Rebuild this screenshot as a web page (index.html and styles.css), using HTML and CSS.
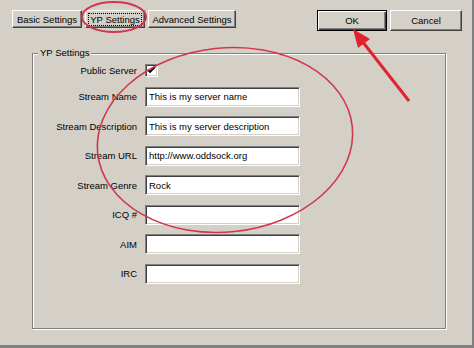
FILE: index.html
```html
<!DOCTYPE html>
<html lang="en">
<head>
    <meta charset="UTF-8">
    <title>YP Settings</title>
    <link rel="stylesheet" href="styles.css">
</head>
<body>
    <div class="window">
        <div class="top-bar">
            <div class="tabs">
                <button class="btn tab">Basic Settings</button>
                <button class="btn tab active"><span class="focus">YP Settings</span></button>
                <button class="btn tab">Advanced Settings</button>
            </div>
            <div class="actions">
                <button class="btn default">OK</button>
                <button class="btn">Cancel</button>
            </div>
        </div>

        <div class="group">
            <span class="group-title">YP Settings</span>
            <div class="form-grid">
                <label>Public Server</label>
                <span class="checkbox">
                    <svg width="9" height="9" viewBox="0 0 9 9"><path d="M1 4l2 2 5-5" fill="none" stroke="#000" stroke-width="1.8"/></svg>
                </span>

                <label>Stream Name</label>
                <input type="text" value="This is my server name">

                <label>Stream Description</label>
                <input type="text" value="This is my server description">

                <label>Stream URL</label>
                <input type="text" value="http://www.oddsock.org">

                <label>Stream Genre</label>
                <input type="text" value="Rock">

                <label>ICQ #</label>
                <input type="text" value="">

                <label>AIM</label>
                <input type="text" value="">

                <label>IRC</label>
                <input type="text" value="">
            </div>
        </div>

        <!-- red annotation marks drawn over the dialog -->
        <svg class="marks" width="474" height="348" viewBox="0 0 474 348">
            <ellipse cx="114" cy="17" rx="32" ry="15" fill="none" stroke="#d2364a" stroke-width="2"/>
            <ellipse cx="225" cy="140" rx="128" ry="92" transform="rotate(-6 225 140)" fill="none" stroke="#d2364a" stroke-width="1.6"/>
            <line x1="409" y1="101" x2="362" y2="41" stroke="#e1222f" stroke-width="3"/>
            <polygon points="353,29 370,39 358,48" fill="#e1222f"/>
        </svg>
    </div>
</body>
</html>
```

FILE: styles.css
```css
body {
    margin: 0;
    padding: 0;
    background: #808080;
    font-family: 'Liberation Sans', Arial, sans-serif;
    font-size: 9.5px;
}

.window {
    position: relative;
    width: 472px;
    height: 345px;
    box-sizing: border-box;
    padding: 10px 10px 0 12px;
    background: #d4d0c8;
}

.top-bar {
    display: flex;
    justify-content: space-between;
    align-items: flex-start;
}

.tabs,
.actions {
    display: flex;
    gap: 3px;
}

.btn {
    font-family: 'Liberation Sans', Arial, sans-serif;
    font-size: 9.5px;
    color: #000;
    background: #d4d0c8;
    border: 1px solid;
    border-color: #fff #404040 #404040 #fff;
    box-shadow: inset -1px -1px 0 #808080;
    padding: 0;
    height: 21px;
    margin: 0;
    white-space: nowrap;
}

.tab {
    height: 18px;
}

.tabs .tab:nth-child(1) { width: 70px; }
.tabs .tab:nth-child(2) { width: 60px; }
.tabs .tab:nth-child(3) { width: 88px; }

.focus {
    border: 1px dotted #000;
    padding: 0 1px;
}

.actions .btn { width: 72px; }

.actions .default {
    width: 70px;
    border: 1px solid #000;
    box-shadow: inset 1px 1px 0 #fff, inset -1px -1px 0 #404040, inset -2px -2px 0 #808080;
}

.group {
    margin: 22px 0 0 20px;
    width: 414px;
    height: 276px;
    box-sizing: border-box;
    border: 1px solid #808080;
    box-shadow: 1px 1px 0 #fff, inset 1px 1px 0 #fff;
}

.group-title {
    display: block;
    width: fit-content;
    margin: -7px 0 0 5px;
    padding: 0 2px;
    line-height: 12px;
    background: #d4d0c8;
}

.form-grid {
    display: grid;
    grid-template-columns: 104px 155px;
    column-gap: 8px;
    row-gap: 9.5px;
    align-items: center;
    margin-top: 5px;
}

label {
    text-align: right;
    white-space: nowrap;
}

input[type="text"] {
    width: 155px;
    height: 20px;
    box-sizing: border-box;
    margin: 0;
    padding: 0 3px;
    font-family: 'Liberation Sans', Arial, sans-serif;
    font-size: 9.5px;
    color: #000;
    background: #fff;
    border: 1px solid;
    border-color: #808080 #fff #fff #808080;
    box-shadow: inset 1px 1px 0 #404040, inset -1px -1px 0 #d4d0c8;
    outline: none;
}

.checkbox {
    width: 13px;
    height: 13px;
    box-sizing: border-box;
    display: flex;
    align-items: center;
    justify-content: center;
    background: #fff;
    border: 1px solid;
    border-color: #808080 #fff #fff #808080;
    box-shadow: inset 1px 1px 0 #404040, inset -1px -1px 0 #d4d0c8;
}

.marks {
    position: absolute;
    left: 0;
    top: 0;
    pointer-events: none;
}
```
